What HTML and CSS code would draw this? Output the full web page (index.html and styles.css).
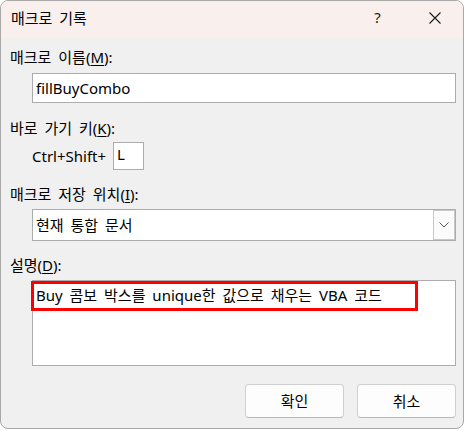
FILE: index.html
```html
<!DOCTYPE html>
<html lang="ko">
<head>
<meta charset="utf-8">
<title>매크로 기록</title>
<link rel="stylesheet" href="styles.css">
</head>
<body>
<div class="dialog">
  <div class="titlebar">
    <span class="title">매크로 기록</span>
    <div class="caption-btns">
      <span class="cap-btn help">?</span>
      <span class="cap-btn close">
        <svg width="12" height="12" viewBox="0 0 12 12"><path d="M0.5 0.5 L11.5 11.5 M11.5 0.5 L0.5 11.5" stroke="#1a1a1a" stroke-width="1.1" fill="none"/></svg>
      </span>
    </div>
  </div>
  <div class="content">
    <div class="label l1">매크로 이름(<u>M</u>):</div>
    <div class="field textbox">fillBuyCombo</div>
    <div class="label l2">바로 가기 키(<u>K</u>):</div>
    <div class="shortcut">
      <span class="ctrl">Ctrl+Shift+</span>
      <span class="keybox">L</span>
    </div>
    <div class="label l3">매크로 저장 위치(<u>I</u>):</div>
    <div class="field combo">
      <span class="combo-text">현재 통합 문서</span>
      <span class="combo-btn">
        <svg width="10" height="6" viewBox="0 0 10 6"><path d="M0.5 0.5 L5 5 L9.5 0.5" stroke="#555" stroke-width="1" fill="none"/></svg>
      </span>
    </div>
    <div class="label l4">설명(<u>D</u>):</div>
    <div class="field textarea">
      <span class="desc">Buy 콤보 박스를 unique한 값으로 채우는 VBA 코드</span>
      <span class="highlight"></span>
    </div>
    <div class="buttons">
      <span class="btn">확인</span>
      <span class="btn">취소</span>
    </div>
  </div>
</div>
</body>
</html>
```
FILE: styles.css
```css
html, body {
  margin: 0;
  padding: 0;
  background: #ffffff;
}
body {
  font-family: "Noto Sans", "Noto Sans CJK KR", sans-serif;
  font-size: 15px;
  word-spacing: 3px;
  color: #000;
}
.dialog {
  width: 464px;
  height: 429px;
  box-sizing: border-box;
  border: 1px solid #a8a8a8;
  border-radius: 8px;
  overflow: hidden;
  background: #f0f0f0;
  display: flex;
  flex-direction: column;
}
.titlebar {
  height: 36px;
  background: #f9f0ee;
  display: flex;
  align-items: center;
  padding-left: 10px;
}
.title {
  line-height: 20px;
  margin-top: -2px;
}
.caption-btns {
  margin-left: auto;
  display: flex;
  height: 100%;
}
.cap-btn {
  width: 57px;
  height: 100%;
  display: flex;
  align-items: center;
  justify-content: center;
}
.help {
  font-size: 15px;
  margin-top: -2px;
  color: #1a1a1a;
}
.close svg {
  margin-top: -2px;
}
.content {
  padding: 0 7px 0 9px;
  display: flex;
  flex-direction: column;
}
.label {
  line-height: 20px;
  height: 20px;
}
.label u {
  text-underline-offset: 2px;
}
.l1 { margin-top: 10px; }
.l2 { margin-top: 15px; }
.l3 { margin-top: 14px; }
.l4 { margin-top: 14px; }
.field {
  margin-left: 22px;
  background: #fff;
  border: 1px solid #acacac;
  box-sizing: border-box;
}
.textbox {
  margin-top: 6px;
  height: 30px;
  line-height: 28px;
  padding-left: 3px;
}
.shortcut {
  margin-top: 4px;
  margin-left: 22px;
  display: flex;
  align-items: center;
  height: 28px;
}
.ctrl {
  width: 81px;
  line-height: 20px;
}
.keybox {
  width: 31px;
  height: 28px;
  box-sizing: border-box;
  border: 1px solid #acacac;
  background: #fff;
  padding: 0 0 0 3px;
  line-height: 22px;
}
.combo {
  margin-top: 5px;
  height: 32px;
  display: flex;
  align-items: center;
  padding: 0 0 0 3px;
}
.combo-text {
  line-height: 20px;
  flex: 1;
}
.combo-btn {
  width: 22px;
  height: 30px;
  box-sizing: border-box;
  border: 1px solid #c8c8c8;
  background: #fbfbfb;
  display: flex;
  align-items: center;
  justify-content: center;
}
.textarea {
  margin-top: 5px;
  height: 86px;
  position: relative;
  padding: 4px 0 0 3px;
  line-height: 20px;
}
.highlight {
  position: absolute;
  left: -2px;
  top: 0px;
  width: 387px;
  height: 30px;
  box-sizing: border-box;
  border: 3px solid #ff0000;
}
.buttons {
  margin-top: 18px;
  display: flex;
  justify-content: flex-end;
  gap: 13px;
  padding-right: 0px;
}
.btn {
  width: 99px;
  height: 34px;
  box-sizing: border-box;
  border: 1px solid #d0d0d0;
  border-bottom-color: #b8b8b8;
  border-radius: 4px;
  background: #fdfdfd;
  display: flex;
  align-items: center;
  justify-content: center;
  line-height: 20px;
}
```
